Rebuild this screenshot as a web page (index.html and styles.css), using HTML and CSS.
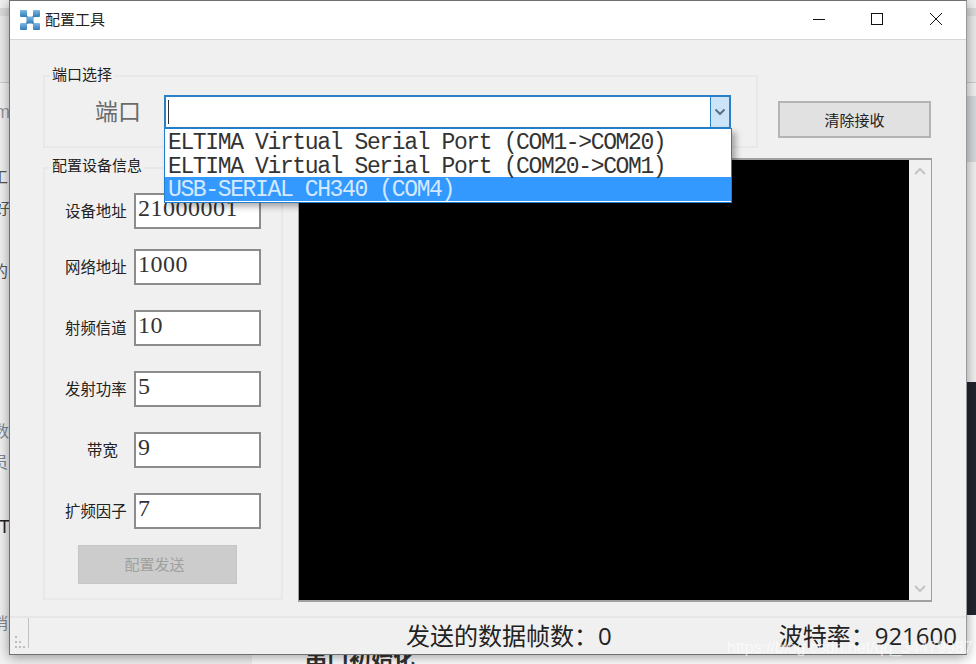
FILE: index.html
```html
<!DOCTYPE html>
<html lang="zh-CN">
<head>
<meta charset="utf-8">
<title>配置工具</title>
<link rel="stylesheet" href="styles.css">
</head>
<body>
<div class="desktop">
  <div class="bg-band bg-band-top"></div>
  <div class="bg-band bg-band-nav"></div>
  <div class="bg-band bg-band-gray"></div>
  <div class="bg-band bg-band-dark"></div>
  <div class="bg-band bg-band-bottom"></div>
  <span class="frag frag-m">m</span>
  <span class="frag frag-a">工</span>
  <span class="frag frag-b">好</span>
  <span class="frag frag-c">的</span>
  <span class="frag frag-d">数</span>
  <span class="frag frag-e">员</span>
  <span class="frag frag-f">T</span>
  <span class="frag frag-g">捎</span>
  <span class="article-heading">串口初始化</span>

  <div class="window">
    <header class="titlebar">
      <svg class="app-icon" width="20" height="20" viewBox="0 0 20 20" aria-hidden="true">
        <defs>
          <linearGradient id="tile" x1="0" y1="0" x2="0" y2="1">
            <stop offset="0" stop-color="#7db8e6"/>
            <stop offset="1" stop-color="#2f7db5"/>
          </linearGradient>
        </defs>
        <path d="M4 4L16 16M16 4L4 16" stroke="#6f8ea6" stroke-width="2"/>
        <rect x="0" y="0" width="7" height="7" rx="1" fill="url(#tile)"/>
        <rect x="13" y="0" width="7" height="7" rx="1" fill="url(#tile)"/>
        <rect x="0" y="13" width="7" height="7" rx="1" fill="url(#tile)"/>
        <rect x="13" y="13" width="7" height="7" rx="1" fill="url(#tile)"/>
        <rect x="6.5" y="6.5" width="7" height="7" rx="1" fill="url(#tile)"/>
      </svg>
      <span class="app-title">配置工具</span>
      <div class="win-controls">
        <span class="win-btn"><svg width="14" height="14" viewBox="0 0 14 14"><path d="M1 7.5H13" stroke="#111" stroke-width="1"/></svg></span>
        <span class="win-btn"><svg width="14" height="14" viewBox="0 0 14 14"><rect x="1.5" y="1.5" width="11" height="11" fill="none" stroke="#111" stroke-width="1"/></svg></span>
        <span class="win-btn"><svg width="14" height="14" viewBox="0 0 14 14"><path d="M1 1L13 13M13 1L1 13" stroke="#111" stroke-width="1"/></svg></span>
      </div>
    </header>

    <main class="client">
      <section class="row-top">
        <div class="group group-port">
          <span class="legend">端口选择</span>
          <label class="port-label">端口</label>
          <div class="combo">
            <div class="combo-field"><span class="caret"></span></div>
            <div class="combo-arrow">
              <svg width="12" height="8" viewBox="0 0 12 8"><path d="M1.5 1.5L6 6L10.5 1.5" fill="none" stroke="#5f6f7d" stroke-width="2"/></svg>
            </div>
            <ul class="dropdown">
              <li class="option">ELTIMA Virtual Serial Port (COM1-&gt;COM20)</li>
              <li class="option">ELTIMA Virtual Serial Port (COM20-&gt;COM1)</li>
              <li class="option option-selected">USB-SERIAL CH340 (COM4)</li>
            </ul>
          </div>
        </div>
        <button class="btn-clear" type="button">清除接收</button>
      </section>

      <section class="row-main">
        <div class="group group-device">
          <span class="legend legend-device">配置设备信息</span>
          <div class="field field-first"><label class="field-label">设备地址</label><input class="field-input" value="21000001"></div>
          <div class="field"><label class="field-label">网络地址</label><input class="field-input" value="1000"></div>
          <div class="field"><label class="field-label">射频信道</label><input class="field-input" value="10"></div>
          <div class="field"><label class="field-label">发射功率</label><input class="field-input" value="5"></div>
          <div class="field"><label class="field-label field-label-short">带宽</label><input class="field-input" value="9"></div>
          <div class="field"><label class="field-label">扩频因子</label><input class="field-input" value="7"></div>
          <button class="btn-send" type="button" disabled>配置发送</button>
        </div>
        <div class="console">
          <div class="console-screen"></div>
          <div class="scrollbar">
            <svg width="14" height="9" viewBox="0 0 14 9"><path d="M2 7L7 2L12 7" fill="none" stroke="#c4c4c4" stroke-width="2.2"/></svg>
            <svg width="14" height="9" viewBox="0 0 14 9"><path d="M2 2L7 7L12 2" fill="none" stroke="#c4c4c4" stroke-width="2.2"/></svg>
          </div>
        </div>
      </section>
    </main>

    <footer class="statusbar">
      <svg class="grip" width="16" height="32" viewBox="0 0 16 32" aria-hidden="true">
        <path d="M14.5 0V30" stroke="#c2c2c2" stroke-width="1"/>
        <g fill="#bdbdbd">
          <rect x="1" y="18" width="2" height="2"/>
          <rect x="1" y="23" width="2" height="2"/>
          <rect x="5" y="23" width="2" height="2"/>
          <rect x="1" y="28" width="2" height="2"/>
          <rect x="5" y="28" width="2" height="2"/>
          <rect x="9" y="28" width="2" height="2"/>
        </g>
      </svg>
      <span class="status-text status-frames">发送的数据帧数&#xFF1A;0</span>
      <span class="status-text status-baud">波特率&#xFF1A;921600</span>
    </footer>
    <span class="watermark">https://blog.csdn.net/qq_34479987</span>
  </div>
</div>
</body>
</html>
```

FILE: styles.css
```css
* { box-sizing: border-box; }

html, body {
  margin: 0;
  padding: 0;
  width: 976px;
  height: 664px;
  overflow: hidden;
}

.desktop {
  position: relative;
  width: 976px;
  height: 664px;
  overflow: hidden;
  background: #f2f2f2;
  font-family: "Noto Sans CJK SC", "Liberation Sans", sans-serif;
}

.bg-band { position: absolute; }
.bg-band-top { left: 0; top: 8px; width: 976px; height: 8px; background: #dcdcdc; }
.bg-band-nav { left: 0; top: 16px; width: 976px; height: 67px; background: #ececec; border-bottom: 1px solid #cfcfcf; }
.bg-band-gray { left: 960px; top: 96px; width: 16px; height: 66px; background: #d6d9dd; }
.bg-band-dark { left: 960px; top: 382px; width: 16px; height: 233px; background: #23252e; }
.bg-band-bottom { left: 252px; top: 615px; width: 724px; height: 49px; background: #fff; }

.frag {
  position: absolute;
  font-size: 16px;
  line-height: 20px;
  color: #555;
}
.frag-m { left: -5px; top: 102px; color: #999; font-family: "Liberation Sans", sans-serif; font-size: 18px; }
.frag-a { left: -8px; top: 166px; }
.frag-b { left: -6px; top: 197px; }
.frag-c { left: -8px; top: 260px; }
.frag-d { left: -7px; top: 420px; color: #7a8794; }
.frag-e { left: -8px; top: 451px; color: #7a8794; }
.frag-f { left: -1px; top: 517px; color: #222; font-family: "Liberation Sans", sans-serif; font-size: 18px; }
.frag-g { left: -8px; top: 612px; color: #888; }

.article-heading {
  position: absolute;
  left: 305px;
  top: 642px;
  font-size: 22px;
  line-height: 28px;
  font-weight: 700;
  color: #333;
}

.window {
  position: absolute;
  left: 9px;
  top: 0;
  width: 958px;
  height: 655px;
  display: flex;
  flex-direction: column;
  background: #f0f0f0;
  border: 1px solid #707070;
  border-right-color: #9a9a9a;
  box-shadow: 0 2px 12px rgba(0, 0, 0, 0.4);
}

.titlebar {
  display: flex;
  align-items: center;
  height: 39px;
  flex: none;
  padding-left: 10px;
  background: #fff;
  border-bottom: 1px solid #d6d6d6;
}
.app-icon { flex: none; }
.app-title {
  margin-left: 5px;
  padding-bottom: 4px;
  font-size: 15px;
  color: #222;
}
.win-controls { display: flex; margin-left: auto; margin-right: 1px; padding-bottom: 2px; }
.win-btn {
  display: flex;
  align-items: center;
  justify-content: center;
  width: 58.5px;
  height: 36px;
}

.client {
  flex: 1;
  min-height: 0;
  padding: 35px 0 0 33px;
}

.row-top { display: flex; align-items: flex-start; }
.row-main { display: flex; align-items: flex-start; gap: 15px; margin-top: 10px; }

.group {
  position: relative;
  border: 2px solid #e8e8e8;
}
.legend {
  position: absolute;
  left: 5px;
  top: -13px;
  padding: 0 2px;
  font-size: 15px;
  line-height: 20px;
  color: #222;
  background: #f0f0f0;
}
.legend-device { top: -14px; }

.group-port {
  display: flex;
  align-items: flex-start;
  width: 715px;
  height: 73px;
  padding: 18px 0 0 50px;
}

.port-label {
  width: 69px;
  font-size: 23px;
  line-height: 30px;
  color: #6b6b6b;
}

.combo {
  position: relative;
  display: flex;
  width: 567px;
  height: 34px;
  border: 2px solid #2b7fc4;
  background: #fff;
}
.combo-field {
  flex: 1;
  padding: 3px 0 0 2px;
}
.caret {
  display: block;
  width: 1px;
  height: 24px;
  background: #333;
}
.combo-arrow {
  display: flex;
  align-items: center;
  justify-content: center;
  width: 19px;
  background: #cce4f7;
  border-left: 1px solid #2b7fc4;
}

.dropdown {
  position: absolute;
  left: -2px;
  top: 31px;
  z-index: 5;
  width: 568px;
  height: 75px;
  margin: 0;
  padding: 1px 0 0;
  list-style: none;
  background: #fff;
  border: 1px solid #1d7fd0;
  box-shadow: 4px 4px 6px rgba(0, 0, 0, 0.3);
}
.option {
  height: 23.5px;
  padding-left: 3px;
  font-family: "Liberation Mono", monospace;
  font-size: 23px;
  letter-spacing: -1.37px;
  line-height: 26px;
  color: #333;
  white-space: nowrap;
}
.option-selected {
  background: #3399ff;
  color: #d4e9ff;
}

.btn-clear {
  width: 153px;
  height: 37px;
  margin: 26px 0 0 20px;
  padding: 0;
  font-family: inherit;
  font-size: 15px;
  color: #222;
  background: #e1e1e1;
  border: 2px solid #b4b4b4;
}

.group-device {
  width: 240px;
  height: 433px;
  margin-top: 9px;
  padding-top: 24px;
}

.field {
  display: flex;
  align-items: center;
  height: 36px;
  margin-top: 25px;
  padding-left: 20px;
}
.field-first { margin-top: 0; margin-bottom: -5px; }
.field-label {
  width: 69px;
  flex: none;
  padding-bottom: 3px;
  font-size: 15.4px;
  color: #222;
  white-space: nowrap;
}
.field-label-short { padding-left: 22px; }
.field-input {
  width: 127px;
  height: 36px;
  padding: 0 2px 5px;
  font-family: "Liberation Serif", serif;
  font-size: 24px;
  letter-spacing: 0.5px;
  color: #333;
  background: #fff;
  border: 2px solid #8c8c8c;
  border-radius: 0;
  outline: none;
}

.btn-send {
  display: block;
  width: 159px;
  height: 39px;
  margin: 16px 0 0 33px;
  padding: 0 6px 2px 0;
  font-family: inherit;
  font-size: 15px;
  color: #a0a0a0;
  background: #cccccc;
  border: 1px solid #c6c6c6;
}

.console {
  display: flex;
  width: 634px;
  height: 444px;
  border: 1px solid #a0a0a0;
  border-top-width: 2px;
  border-bottom-width: 2px;
}
.console-screen { flex: 1; background: #000; }
.scrollbar {
  display: flex;
  flex-direction: column;
  align-items: center;
  justify-content: space-between;
  width: 22px;
  padding: 7px 0 7px;
  background: #f0f0f0;
}

.statusbar {
  display: flex;
  align-items: center;
  height: 38px;
  flex: none;
  padding: 0 9px 0 4px;
  border-top: 2px solid #e6e6e6;
}
.grip { flex: none; align-self: flex-end; margin-bottom: 4px; }
.status-text {
  font-family: "Open Sans", "Noto Sans CJK SC", sans-serif;
  font-size: 24px;
  line-height: 34px;
  color: #222;
  white-space: nowrap;
}
.status-frames { margin-left: 376px; }
.status-baud { margin-left: auto; }

.watermark {
  position: absolute;
  left: 717px;
  top: 637px;
  font-family: "Liberation Sans", sans-serif;
  font-size: 16px;
  line-height: 20px;
  color: rgba(255, 255, 255, 0.62);
  white-space: nowrap;
}
```
